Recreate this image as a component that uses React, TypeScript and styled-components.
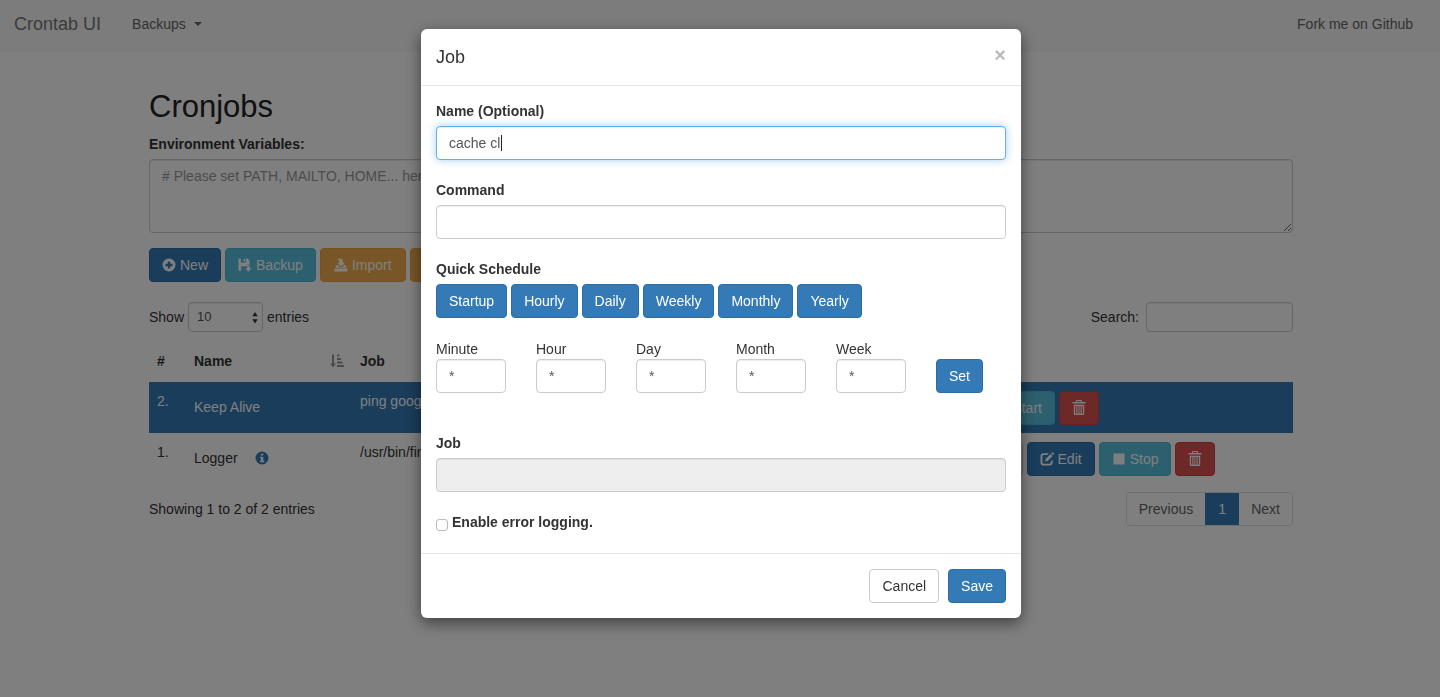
import React, { useState } from "react";
import styled, { createGlobalStyle, css } from "styled-components";

const Global = createGlobalStyle`
  *, *::before, *::after { box-sizing: border-box; }
  html, body { margin: 0; background: #fff; }
  body, button, input, select, textarea {
    font-family: "Liberation Sans", Arial, sans-serif;
    font-size: 14px;
    line-height: 20px;
    color: #333;
  }
`;

const Page = styled.div`
  min-height: 100vh;
  background: #fff;
`;

const Navbar = styled.nav`
  display: flex;
  align-items: center;
  height: 52px;
  padding: 0 27px 4px 14px;
  background: #f8f8f8;
`;

const NavLink = styled.a<{ $brand?: boolean }>`
  display: inline-flex;
  align-items: center;
  gap: 8px;
  margin-right: 31px;
  font-size: ${(p) => (p.$brand ? "18px" : "14px")};
  color: ${(p) => (p.$brand ? "#777" : "#666")};
  text-decoration: none;
  &:last-child { margin: 0 0 0 auto; }
`;

const Caret = styled.span`
  border-top: 4px solid currentColor;
  border-left: 4px solid transparent;
  border-right: 4px solid transparent;
`;

const Container = styled.main`
  max-width: 1146px;
  margin: 0 auto;
  padding: 38px 0 0 2px;
`;

const Heading = styled.h2`
  margin: 0 0 10px;
  font-size: 31px;
  line-height: 34px;
  font-weight: 500;
  color: #222;
`;

const Label = styled.label<{ $plain?: boolean }>`
  display: block;
  margin-bottom: ${(p) => (p.$plain ? "0" : "5px")};
  font-weight: ${(p) => (p.$plain ? 400 : 700)};
`;

const field = css`
  border: 1px solid #ccc;
  border-radius: 4px;
  background: #fff;
  box-shadow: inset 0 1px 1px rgba(0, 0, 0, 0.075);
  outline: 0;
  color: #555;
`;

const EnvArea = styled.textarea`
  ${field}
  display: block;
  width: 100%;
  height: 74px;
  padding: 6px 12px;
  &::placeholder { color: #999; }
`;

const Input = styled.input`
  ${field}
  display: block;
  width: 100%;
  height: 34px;
  padding: 6px 12px;
  &:focus {
    border-color: #66afe9;
    box-shadow: inset 0 1px 1px rgba(0, 0, 0, 0.075), 0 0 8px rgba(102, 175, 233, 0.6);
  }
  &:read-only { background: #eee; }
`;

const FocusedField = styled.div`
  position: relative;
  input { caret-color: transparent; }
`;

const TextCursor = styled.span`
  position: absolute;
  left: 65px;
  top: 9px;
  width: 1px;
  height: 16px;
  background: #222;
`;

const tones = {
  primary: ["#337ab7", "#2e6da4", "#fff"],
  info: ["#5bc0de", "#46b8da", "#fff"],
  warning: ["#f0ad4e", "#eea236", "#fff"],
  danger: ["#d9534f", "#d43f3a", "#fff"],
  plain: ["#fff", "#ccc", "#333"],
};

const Button = styled.button<{ $tone: keyof typeof tones; $wide?: boolean }>`
  display: inline-flex;
  align-items: center;
  justify-content: center;
  gap: 4px;
  height: 34px;
  min-width: ${(p) => (p.$wide ? "86px" : "0")};
  padding: 0 12px;
  border: 1px solid ${(p) => tones[p.$tone][1]};
  border-radius: 4px;
  background: ${(p) => tones[p.$tone][0]};
  color: ${(p) => tones[p.$tone][2]};
  white-space: nowrap;
`;

const ButtonRow = styled.div`
  display: flex;
  gap: 4px;
`;

const Toolbar = styled(ButtonRow)`
  margin: 15px 0 20px;
`;

const TableTools = styled.div`
  display: flex;
  justify-content: space-between;
  align-items: center;
  height: 30px;
`;

const InlineLabel = styled.label`
  display: inline-flex;
  align-items: center;
  gap: 4px;
`;

const SelectBox = styled.span`
  position: relative;
  display: inline-flex;
  svg { position: absolute; right: 1px; top: 9px; pointer-events: none; }
`;

const LengthSelect = styled.select`
  ${field}
  appearance: none;
  width: 75px;
  height: 30px;
  padding: 0 8px;
  font-size: 13px;
`;

const SearchInput = styled.input`
  ${field}
  width: 147px;
  height: 30px;
  margin-left: 3px;
  padding: 5px 10px;
`;

const Table = styled.table`
  width: 100%;
  margin: 9px 0 8px;
  border-collapse: collapse;
  table-layout: fixed;
  th, td { padding: 8px; text-align: left; vertical-align: top; line-height: 20px; }
  th { height: 41px; padding-top: 10px; }
  th:last-child { padding: 0; }
`;

const Row = styled.tr<{ $selected?: boolean }>`
  height: 51px;
  background: ${(p) => (p.$selected ? "#337ab7" : "#fff")};
  td { color: ${(p) => (p.$selected ? "#fff" : "#333")}; padding-top: 9px; white-space: nowrap; }
`;

const NameCell = styled.div`
  display: flex;
  align-items: center;
  gap: 17px;
  height: 32px;
`;

const HeadCell = styled.div`
  display: flex;
  align-items: center;
  justify-content: space-between;
`;

const TableFooter = styled.div`
  display: flex;
  justify-content: space-between;
  align-items: center;
`;

const Pager = styled.div`
  display: flex;
  border: 1px solid #ddd;
  border-radius: 4px;
  overflow: hidden;
`;

const PageButton = styled.button<{ $current?: boolean }>`
  height: 32px;
  padding: 0 12px;
  border: 0;
  background: ${(p) => (p.$current ? "#337ab7" : "#fff")};
  color: ${(p) => (p.$current ? "#fff" : "#666")};
  min-width: 34px;
`;

const Backdrop = styled.div`
  position: fixed;
  inset: 0;
  display: flex;
  justify-content: center;
  align-items: flex-start;
  padding: 29px 0 0 2px;
  background: rgba(0, 0, 0, 0.5);
`;

const Dialog = styled.form`
  width: 600px;
  border-radius: 6px;
  background: #fff;
  box-shadow: 0 5px 15px rgba(0, 0, 0, 0.5);
`;

const DialogHeader = styled.header`
  display: flex;
  justify-content: space-between;
  align-items: center;
  height: 57px;
  padding: 0 15px;
  border-bottom: 1px solid #e5e5e5;
`;

const DialogTitle = styled.h4`
  margin: 0;
  font-size: 18px;
  font-weight: 500;
`;

const Close = styled.button`
  padding: 0 0 5px;
  border: 0;
  background: none;
  color: #bbb;
  font-size: 20px;
  font-weight: 700;
`;

const DialogBody = styled.div`
  min-height: calc(100vh - 230px);
  padding: 15px;
`;

const Group = styled.div`
  margin-bottom: 20px;
`;

const TimeRow = styled.div`
  display: grid;
  grid-template-columns: repeat(5, 70px) auto;
  column-gap: 30px;
  align-items: end;
  justify-content: start;
  padding-top: 1px;
  margin-bottom: 40px;
`;

const CheckLabel = styled.label`
  display: flex;
  align-items: center;
  gap: 4px;
  font-weight: 700;
`;

const Checkbox = styled.input`
  appearance: none;
  width: 12px;
  height: 12px;
  margin: 5px 0 0;
  border: 1px solid #bbb;
  border-radius: 3px;
  background: #fff;
`;

const DialogFooter = styled.footer`
  display: flex;
  justify-content: flex-end;
  gap: 9px;
  padding: 15px;
  border-top: 1px solid #e5e5e5;
`;

const shapes = {
  plus: <path fillRule="evenodd" d="M7 0.5a6.5 6.5 0 1 0 0 13a6.5 6.5 0 0 0 0-13zM5.8 3.5h2.4v2.3h2.3v2.4H8.2v2.3H5.8V8.2H3.5V5.8h2.3z" />,
  info: <path fillRule="evenodd" d="M7 0.5a6.5 6.5 0 1 0 0 13a6.5 6.5 0 0 0 0-13zM5.9 2.7h2.4v1.9H5.9zM5 5.7h3.3v4h1v1.5H5V9.7h1V7.2H5z" />,
  save: <path d="M0.5 0.5h2.3v4.3h5V0.5h1.7l2 2v4.3H9.3v1.5H3.2v4.5H0.5zM5.6 1h1.5v2.6H5.6zM9.2 7.5h2.4v2.8h2L10.4 13.7L7.2 10.3h2z" />,
  import: <path d="M0.5 10.5h13v3h-13zM2.6 7h1.6l1 2h3.6l1-2h1.6l1.1 2.7H1.5zM5.2 4.8V3.2C5.2 2 4.5 1.2 3 1.2C3.8 0.4 9 -0.6 9 3.4v1.4h2L7.1 8.5L3.2 4.8z" />,
  edit: <path d="M9 1.2H3.4A2.9 2.9 0 0 0 0.5 4.1v6.5a2.9 2.9 0 0 0 2.9 2.9h6.3a2.9 2.9 0 0 0 2.9-2.9V7.8l-1.9 1.8v0.9a1.2 1.2 0 0 1-1.2 1.2H3.6a1.2 1.2 0 0 1-1.2-1.2V4.3a1.2 1.2 0 0 1 1.2-1.2h3.6zM10.5 2l2 2L7.6 8.9L5 9.5l.6-2.6zM11.2 1.3l.7-.8a.8.8 0 0 1 1 0l.9.9a.8.8 0 0 1 0 1l-.8.8z" />,
  stop: <path d="M1.5 1.5h11v11h-11z" />,
  play: <path d="M2.5 1l10 6l-10 6z" />,
  trash: <path fillRule="evenodd" d="M5 -1h4a1 1 0 0 1 1 1v1h3.5v1.5H0.5V1H4V0a1 1 0 0 1 1-1zM5.2 0v1h3.6V0zM1.8 3.8h10.4v8.9a1.3 1.3 0 0 1-1.3 1.3H3.1a1.3 1.3 0 0 1-1.3-1.3zM3.1 4.9v7.8h1.2V4.9zM5.4 4.9v7.8h1.1V4.9zM7.5 4.9v7.8h1.1V4.9zM9.7 4.9v7.8h1.2V4.9z" />,
  sort: <path d="M2 0.5h2v9h2L3 13.5L0 9.5h2zM7 0.5h2.5v2H7zM7 4h4v2H7zM7 7.5h5.5v2H7zM7 11h7v2H7z" />,
  arrows: <path d="M7 1l2.7 4.2H4.3zM7 12.5l2.7-4.2H4.3z" />,
};

const IconSvg = styled.svg`
  flex: none;
  overflow: visible;
`;

const Icon = ({ name, color = "currentColor" }: { name: keyof typeof shapes; color?: string }) => (
  <IconSvg width="14" height="14" viewBox="0 0 14 14" fill={color} aria-hidden="true">
    {shapes[name]}
  </IconSvg>
);

const jobs = [
  { id: 2, name: "Keep Alive", command: "ping google", selected: true },
  { id: 1, name: "Logger", command: "/usr/bin/find", selected: false },
];

const presets = ["Startup", "Hourly", "Daily", "Weekly", "Monthly", "Yearly"];
const units = ["Minute", "Hour", "Day", "Month", "Week"];

export default function App() {
  const [name, setName] = useState("cache cl");
  return (
    <>
      <Global />
      <Page>
        <Navbar>
          <NavLink $brand href="#">Crontab UI</NavLink>
          <NavLink href="#backups">Backups <Caret /></NavLink>
          <NavLink href="#github">Fork me on Github</NavLink>
        </Navbar>
        <Container>
          <Heading>Cronjobs</Heading>
          <Label htmlFor="env">Environment Variables:</Label>
          <EnvArea id="env" placeholder="# Please set PATH, MAILTO, HOME... here" />
          <Toolbar>
            <Button $tone="primary"><Icon name="plus" />New</Button>
            <Button $tone="info" $wide><Icon name="save" />Backup</Button>
            <Button $tone="warning" $wide><Icon name="import" />Import</Button>
            <Button $tone="warning" $wide aria-label="Export"><Icon name="import" /></Button>
          </Toolbar>
          <TableTools>
            <InlineLabel>
              Show
              <SelectBox>
                <LengthSelect defaultValue="10"><option>10</option><option>25</option></LengthSelect>
                <Icon name="arrows" color="#333" />
              </SelectBox>
              entries
            </InlineLabel>
            <InlineLabel>Search:<SearchInput type="search" /></InlineLabel>
          </TableTools>
          <Table>
            <colgroup>
              <col style={{ width: 37 }} />
              <col style={{ width: 166 }} />
              <col />
              <col style={{ width: 495 }} />
            </colgroup>
            <thead>
              <tr>
                <th>#</th>
                <th><HeadCell>Name<Icon name="sort" color="#999" /></HeadCell></th>
                <th>Job</th>
                <th aria-label="Actions" />
              </tr>
            </thead>
            <tbody>
              {jobs.map((job) => (
                <Row key={job.id} $selected={job.selected}>
                  <td>{job.id}.</td>
                  <td><NameCell>{job.name}<Icon name="info" color="#337ab7" /></NameCell></td>
                  <td>{job.command}</td>
                  <td>
                    <ButtonRow>
                      <Button $tone="info"><Icon name="play" />Run now</Button>
                      {!job.selected && <Button $tone="plain"><Icon name="stop" />Check logs</Button>}
                      <Button $tone="primary"><Icon name="edit" />Edit</Button>
                      <Button $tone="info">
                        <Icon name={job.selected ? "play" : "stop"} />
                        {job.selected ? "Start" : "Stop"}
                      </Button>
                      <Button $tone="danger" aria-label="Delete"><Icon name="trash" /></Button>
                    </ButtonRow>
                  </td>
                </Row>
              ))}
            </tbody>
          </Table>
          <TableFooter>
            <span>Showing 1 to 2 of 2 entries</span>
            <Pager>
              <PageButton>Previous</PageButton>
              <PageButton $current>1</PageButton>
              <PageButton>Next</PageButton>
            </Pager>
          </TableFooter>
        </Container>
      </Page>
      <Backdrop>
        <Dialog role="dialog" aria-label="Job" onSubmit={(e) => e.preventDefault()}>
          <DialogHeader>
            <DialogTitle>Job</DialogTitle>
            <Close type="button" aria-label="Close">×</Close>
          </DialogHeader>
          <DialogBody>
            <Group>
              <Label htmlFor="name">Name (Optional)</Label>
              <FocusedField>
                <Input id="name" autoFocus value={name} onChange={(e) => setName(e.target.value)} />
                <TextCursor />
              </FocusedField>
            </Group>
            <Group>
              <Label htmlFor="command">Command</Label>
              <Input id="command" />
            </Group>
            <Group>
              <Label as="div">Quick Schedule</Label>
              <ButtonRow>
                {presets.map((p) => <Button key={p} type="button" $tone="primary">{p}</Button>)}
              </ButtonRow>
            </Group>
            <TimeRow>
              {units.map((u) => (
                <Label key={u} $plain>{u}<Input defaultValue="*" /></Label>
              ))}
              <Button type="button" $tone="primary">Set</Button>
            </TimeRow>
            <Group>
              <Label htmlFor="job">Job</Label>
              <Input id="job" readOnly />
            </Group>
            <CheckLabel><Checkbox type="checkbox" />Enable error logging.</CheckLabel>
          </DialogBody>
          <DialogFooter>
            <Button type="button" $tone="plain">Cancel</Button>
            <Button $tone="primary">Save</Button>
          </DialogFooter>
        </Dialog>
      </Backdrop>
    </>
  );
}
